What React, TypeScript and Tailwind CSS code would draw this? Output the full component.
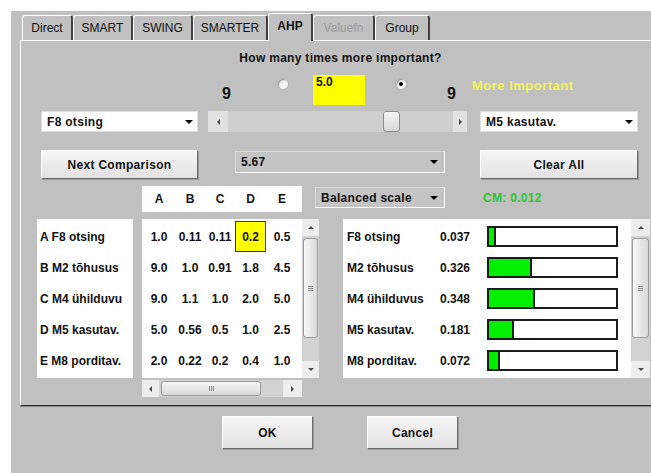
import React from "react";

type Tab = { label: string; w: string; active?: boolean; disabled?: boolean };

const tabs: Tab[] = [
  { label: "Direct", w: "w-[51px]" },
  { label: "SMART", w: "w-[60px]" },
  { label: "SWING", w: "w-[60px]" },
  { label: "SMARTER", w: "w-[75px]" },
  { label: "AHP", w: "w-[45px]", active: true },
  { label: "Valuefn", w: "w-[62px]", disabled: true },
  { label: "Group", w: "w-[55px]" },
];

const rows = [
  { label: "A F8 otsing", values: ["1.0", "0.11", "0.11", "0.2", "0.5"] },
  { label: "B M2 tõhusus", values: ["9.0", "1.0", "0.91", "1.8", "4.5"] },
  { label: "C M4 ühilduvu", values: ["9.0", "1.1", "1.0", "2.0", "5.0"] },
  { label: "D M5 kasutav.", values: ["5.0", "0.56", "0.5", "1.0", "2.5"] },
  { label: "E M8 porditav.", values: ["2.0", "0.22", "0.2", "0.4", "1.0"] },
];

const colW = ["w-[32px]", "w-[30px]", "w-[30px]", "w-[31px]", "w-[32px]"];

const weights = [
  { name: "F8 otsing", value: 0.037 },
  { name: "M2 tõhusus", value: 0.326 },
  { name: "M4 ühilduvus", value: 0.348 },
  { name: "M5 kasutav.", value: 0.181 },
  { name: "M8 porditav.", value: 0.072 },
];

const DownArrow = () => (
  <div className="w-0 h-0 border-x-[4px] border-x-transparent border-t-[4px] border-t-black" />
);
const UpSmall = () => (
  <div className="w-0 h-0 border-x-[3px] border-x-transparent border-b-[3px] border-b-[#4a4a4a]" />
);
const DownSmall = () => (
  <div className="w-0 h-0 border-x-[3px] border-x-transparent border-t-[3px] border-t-[#4a4a4a]" />
);
const LeftSmall = () => (
  <div className="w-0 h-0 border-y-[3px] border-y-transparent border-r-[3px] border-r-[#4a4a4a]" />
);
const RightSmall = () => (
  <div className="w-0 h-0 border-y-[3px] border-y-transparent border-l-[3px] border-l-[#4a4a4a]" />
);

const Radio = ({ checked }: { checked?: boolean }) => (
  <div className="w-[12px] h-[12px] rounded-full border border-[#b4b4b4] bg-gradient-to-br from-[#e6e6e6] to-white shadow-[inset_1px_1px_1px_#9a9a9a] flex items-center justify-center">
    {checked && <div className="w-[4px] h-[4px] rounded-full bg-black" />}
  </div>
);

const Button = ({ label, className }: { label: string; className: string }) => (
  <div
    className={`${className} flex items-center justify-center bg-gradient-to-b from-[#f6f6f6] to-[#e2e2e2] border border-t-white border-l-white border-b-[#6a6a6a] border-r-[#6a6a6a] shadow-[1px_1px_0_#9c9c9c] text-[12px] font-bold tracking-[0.3px]`}
  >
    {label}
  </div>
);

const Combo = ({ text, className, white }: { text: string; className: string; white?: boolean }) => (
  <div
    className={`${className} flex items-center justify-between pl-[5px] text-[12px] font-bold tracking-[0.3px] border ${
      white
        ? "bg-white border-[#dcdcdc] pr-[4px]"
        : "bg-[#c4c4c4] border-t-[#dadada] border-l-[#dadada] border-b-white border-r-white pr-[6px]"
    }`}
  >
    <span>{text}</span>
    <DownArrow />
  </div>
);

const VScroll = ({ w }: { w: string }) => (
  <div className={`${w} h-full flex flex-col bg-[#d2d2d2] shrink-0`}>
    <div className="h-[17px] shrink-0 bg-[#ededed] flex items-center justify-center">
      <UpSmall />
    </div>
    <div className="h-[100px] mt-[2px] mx-[1px] shrink-0 rounded-[3px] border border-[#9a9a9a] bg-gradient-to-r from-[#f7f7f7] to-[#d9d9d9] flex flex-col items-center justify-center gap-[1px]">
      <div className="w-[5px] h-px bg-[#8a8a8a]" />
      <div className="w-[5px] h-px bg-[#8a8a8a]" />
      <div className="w-[5px] h-px bg-[#8a8a8a]" />
    </div>
    <div className="flex-1" />
    <div className="h-[17px] shrink-0 bg-[#ededed] flex items-center justify-center">
      <DownSmall />
    </div>
  </div>
);

const HScroll = () => (
  <div className="w-[160px] h-[17px] flex bg-[#d2d2d2]">
    <div className="w-[17px] bg-[#ededed] flex items-center justify-center">
      <LeftSmall />
    </div>
    <div className="w-[100px] ml-[2px] my-[1px] rounded-[3px] border border-[#9a9a9a] bg-gradient-to-b from-[#f7f7f7] to-[#d9d9d9] flex items-center justify-center gap-[1px]">
      <div className="w-px h-[5px] bg-[#8a8a8a]" />
      <div className="w-px h-[5px] bg-[#8a8a8a]" />
      <div className="w-px h-[5px] bg-[#8a8a8a]" />
    </div>
    <div className="flex-1" />
    <div className="w-[19px] bg-[#ededed] flex items-center justify-center">
      <RightSmall />
    </div>
  </div>
);

const Slider = () => (
  <div className="w-[259px] h-[21px] flex bg-[#cfcfcf]">
    <div className="w-[20px] bg-[#e2e2e2] flex items-center justify-center">
      <LeftSmall />
    </div>
    <div className="w-[155px]" />
    <div className="w-[17px] rounded-[3px] border border-[#8e8e8e] bg-gradient-to-b from-[#f7f7f7] to-[#d6d6d6]" />
    <div className="flex-1" />
    <div className="w-[14px] bg-[#e2e2e2] flex items-center justify-center">
      <RightSmall />
    </div>
  </div>
);

export default function App() {
  return (
    <div className="w-[651px] h-[473px] bg-white pt-[11px] pl-[11px] overflow-hidden font-['Liberation_Sans',Arial,sans-serif] text-[#111]">
      <div className="w-[640px] h-[462px] bg-[#c0c0c0] flex flex-col overflow-hidden">
        {/* tab strip */}
        <div className="flex items-end ml-[11px] mt-[2px] h-[27px] shrink-0">
          {tabs.map((t) =>
            t.active ? (
              <div
                key={t.label}
                className={`${t.w} h-[28px] -mb-px relative z-10 bg-[#c0c0c0] border-t border-l border-white border-r-2 border-r-[#404040] rounded-t-[3px] pt-[5px] text-center text-[12px] font-bold leading-[14px]`}
              >
                {t.label}
              </div>
            ) : (
              <div
                key={t.label}
                className={`${t.w} h-[25px] bg-[#c0c0c0] border-t border-l border-white border-r-2 border-r-[#404040] rounded-t-[3px] pt-[5px] text-center text-[12px] leading-[14px] ${
                  t.disabled ? "text-[#9c9c9c]" : ""
                }`}
              >
                {t.label}
              </div>
            )
          )}
        </div>

        {/* AHP page */}
        <div className="ml-[9px] w-[640px] h-[366px] shrink-0 border-t border-l border-white border-b border-b-[#2a2a2a] shadow-[0_1px_0_#8a8a8a] flex flex-col">
          <div className="mt-[9px] h-[16px] text-center text-[12px] font-bold tracking-[0.3px] leading-[16px]">
            How many times more important?
          </div>

          <div className="mt-[9px] h-[30px] flex items-start">
            <div className="ml-[201px] w-[12px] mt-[10px] text-[16px] font-bold leading-[18px]">9</div>
            <div className="ml-[43px] mt-[3px]">
              <Radio />
            </div>
            <div className="ml-[24px] w-[52px] h-[30px] bg-[#ffff00] pl-[3px] text-[12px] font-bold leading-[14px]">
              5.0
            </div>
            <div className="ml-[30px] mt-[3px]">
              <Radio checked />
            </div>
            <div className="ml-[40px] w-[12px] mt-[10px] text-[16px] font-bold leading-[18px]">9</div>
            <div className="ml-[13px] mt-[4px] text-[13px] font-bold tracking-[0.5px] leading-[14px] text-[#f4f45a]">
              More Important
            </div>
          </div>

          <div className="mt-[6px] h-[21px] flex">
            <Combo white text="F8 otsing" className="ml-[20px] w-[157px] h-[21px]" />
            <div className="ml-[10px]">
              <Slider />
            </div>
            <Combo white text="M5 kasutav." className="ml-[13px] w-[158px] h-[21px]" />
          </div>

          <div className="mt-[18px] h-[29px] flex items-start">
            <Button label="Next Comparison" className="ml-[20px] w-[157px] h-[29px]" />
            <Combo text="5.67" className="ml-[37px] mt-[1px] w-[210px] h-[22px]" />
            <Button label="Clear All" className="ml-[35px] w-[158px] h-[29px]" />
          </div>

          <div className="mt-[7px] h-[26px] flex items-start">
            <div className="ml-[121px] w-[160px] h-[26px] bg-white flex items-center pl-px text-[12px] font-bold">
              {["A", "B", "C", "D", "E"].map((c, i) => (
                <div key={c} className={`${colW[i]} text-center`}>
                  {c}
                </div>
              ))}
            </div>
            <Combo text="Balanced scale" className="ml-[13px] mt-[1px] w-[130px] h-[21px]" />
            <div className="ml-[38px] mt-[5px] text-[12px] font-bold tracking-[0.3px] leading-[14px] text-[#2ec42e]">
              CM: 0.012
            </div>
          </div>

          <div className="mt-[7px] flex items-start">
            <div className="ml-[16px] w-[96px] h-[159px] bg-white pt-[2px] text-[12px] font-bold">
              {rows.map((r) => (
                <div key={r.label} className="h-[31px] flex items-center pl-[3px] whitespace-nowrap overflow-hidden">
                  {r.label}
                </div>
              ))}
            </div>

            <div className="ml-[9px] flex flex-col">
              <div className="h-[159px] flex">
                <div className="w-[160px] h-full bg-white pt-[2px] text-[12px] font-bold">
                  {rows.map((r, ri) => (
                    <div key={r.label} className="h-[31px] flex pl-px">
                      {r.values.map((v, ci) => (
                        <div
                          key={ci}
                          className={`${colW[ci]} h-full flex items-center justify-center ${
                            ri === 0 && ci === 3 ? "bg-[#ffff00] border border-[#3a3a3a]" : ""
                          }`}
                        >
                          {v}
                        </div>
                      ))}
                    </div>
                  ))}
                </div>
                <VScroll w="w-[17px]" />
              </div>
              <div className="mt-[2px]">
                <HScroll />
              </div>
            </div>

            <div className="ml-[24px] h-[159px] flex">
              <div className="w-[288px] h-full bg-white pt-[2px] text-[12px] font-bold">
                {weights.map((w) => (
                  <div key={w.name} className="h-[31px] flex items-center">
                    <div className="w-[97px] pl-[4px] whitespace-nowrap">{w.name}</div>
                    <div className="w-[47px]">{w.value.toFixed(3)}</div>
                    <div className="w-[131px] h-[21px] border-2 border-[#1c1c1c] bg-white flex">
                      <div className="h-full bg-[#00f000]" style={{ width: Math.max(3, Math.round(w.value * 127)) }} />
                      <div className="h-full w-[2px] bg-[#1c1c1c]" />
                    </div>
                  </div>
                ))}
              </div>
              <VScroll w="w-[19px]" />
            </div>
          </div>
        </div>

        <div className="mt-[10px] flex">
          <Button label="OK" className="ml-[211px] w-[91px] h-[33px]" />
          <Button label="Cancel" className="ml-[54px] w-[91px] h-[33px]" />
        </div>
      </div>
    </div>
  );
}
